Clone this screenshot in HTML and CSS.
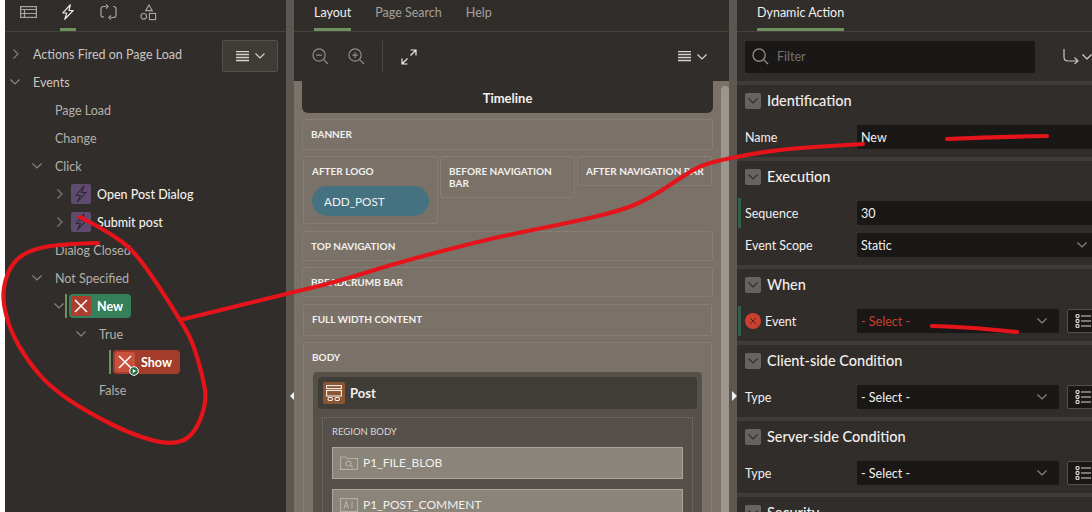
FILE: index.html
```html
<!DOCTYPE html>
<html lang="en">
<head>
    <meta charset="UTF-8">
    <title>Page Designer</title>
    <link rel="stylesheet" href="styles.css">
</head>
<body>
    <svg class="defs" width="0" height="0">
        <symbol id="chev-down" viewBox="0 0 10 6"><path d="M.5.5 5 5 9.500.5" fill="none" stroke="currentColor" stroke-width="1.200"/></symbol>
        <symbol id="chev-right" viewBox="0 0 6 10"><path d="M.5.5 5 5 .5 9.500" fill="none" stroke="currentColor" stroke-width="1.200"/></symbol>
        <symbol id="bolt" viewBox="0 0 20 20"><path d="M13 2 5 11.500h4.500L6.500 18l8.500-9.500h-4.500z" fill="none" stroke="currentColor" stroke-width="1.100" stroke-linejoin="round"/></symbol>
        <symbol id="cross" viewBox="0 0 20 20"><path d="M4 4l12 12M16 4 4 16" fill="none" stroke="currentColor" stroke-width="1.500"/></symbol>
        <symbol id="lines" viewBox="0 0 13 11"><path d="M0 .5h13M0 3.500h13M0 6.500h13M0 9.500h13" fill="none" stroke="currentColor" stroke-width="1.300"/></symbol>
        <symbol id="gadget" viewBox="0 0 16 14"><g fill="none" stroke="currentColor" stroke-width="1.200"><circle cx="2.500" cy="2" r="1.600"/><circle cx="2.500" cy="7" r="1.600"/><circle cx="2.500" cy="12" r="1.600"/><path d="M6 2h10M6 7h10M6 12h10"/></g></symbol>
    </svg>

    <div class="app">
        <!-- Arbre -->
        <section class="panel tree-panel">
            <div class="tabs icon-tabs">
                <a class="icon-tab">
                    <svg width="17" height="12" viewBox="0 0 17 12" fill="none" stroke="#a8a4a0" stroke-width="1.200"><rect x=".6" y=".6" width="15.800" height="10.800"/><path d="M.6 3.500h15.800M.6 7.500h15.800M4.500 3.500v8"/></svg>
                </a>
                <a class="icon-tab active">
                    <svg width="14" height="16" viewBox="0 0 14 17" fill="none" stroke="#f0eeec" stroke-width="1.200" stroke-linejoin="round"><path d="M9.500.8 1.500 9.500h4.300L3.500 16.200l9-9.300H8z"/></svg>
                </a>
                <a class="icon-tab">
                    <svg width="17" height="17" viewBox="0 0 17 17" fill="none" stroke="#a8a4a0" stroke-width="1.200"><path d="M6 2.500H3.500Q1 2.500 1 5v6q0 2 2.500 2H4M11 13.500h2.500Q16 13.500 16 11V5q0-2.500-2.500-2.500H13"/><path d="M6 .5 8 2.500 6 4.500M11 11.500l-2 2 2 2"/></svg>
                </a>
                <a class="icon-tab">
                    <svg width="17" height="17" viewBox="0 0 18 18" fill="none" stroke="#a8a4a0" stroke-width="1.200"><path d="M9.500 1 13 7H6z"/><circle cx="4" cy="13" r="3"/><rect x="10" y="10" width="6.500" height="6.500"/></svg>
                </a>
            </div>
            <button class="menu-btn" type="button">
                <svg class="lines"><use href="#lines"/></svg>
                <svg class="chev-d bright"><use href="#chev-down"/></svg>
            </button>
            <ul class="tree">
                <li class="row"><span class="slot"><svg class="chev-r"><use href="#chev-right"/></svg></span>Actions Fired on Page Load</li>
                <li>
                    <div class="row"><span class="slot"><svg class="chev-d"><use href="#chev-down"/></svg></span>Events</div>
                    <ul>
                        <li class="row"><span class="slot"></span>Page Load</li>
                        <li class="row"><span class="slot"></span>Change</li>
                        <li>
                            <div class="row"><span class="slot"><svg class="chev-d"><use href="#chev-down"/></svg></span>Click</div>
                            <ul>
                                <li class="row strong">
                                    <span class="slot short"><svg class="chev-r"><use href="#chev-right"/></svg></span>
                                    <span class="da-icon"><svg><use href="#bolt"/></svg></span>Open Post Dialog
                                </li>
                                <li class="row strong">
                                    <span class="slot short"><svg class="chev-r"><use href="#chev-right"/></svg></span>
                                    <span class="da-icon"><svg><use href="#bolt"/></svg></span>Submit post
                                </li>
                            </ul>
                        </li>
                        <li class="row"><span class="slot"></span>Dialog Closed</li>
                        <li>
                            <div class="row"><span class="slot"><svg class="chev-d"><use href="#chev-down"/></svg></span>Not Specified</div>
                            <ul>
                                <li>
                                    <div class="row">
                                        <span class="slot tiny"><svg class="chev-d"><use href="#chev-down"/></svg></span>
                                        <span class="badge ok"><span class="badge-x"><svg><use href="#cross"/></svg></span>New</span>
                                    </div>
                                    <ul>
                                        <li>
                                            <div class="row"><span class="slot"><svg class="chev-d"><use href="#chev-down"/></svg></span>True</div>
                                            <ul>
                                                <li class="row">
                                                    <span class="slot tiny"></span>
                                                    <span class="badge bad"><span class="badge-x"><svg><use href="#cross"/></svg></span>Show
                                                        <svg class="play" width="10" height="10" viewBox="0 0 10 10"><circle cx="5" cy="5" r="4.300" fill="#2a6a4c" stroke="#fff" stroke-width="1"/><path d="M3.800 3v4L7 5z" fill="#fff"/></svg>
                                                    </span>
                                                </li>
                                            </ul>
                                        </li>
                                        <li class="row"><span class="slot"></span>False</li>
                                    </ul>
                                </li>
                            </ul>
                        </li>
                    </ul>
                </li>
            </ul>
        </section>

        <div class="gutter"><span class="tri left"></span></div>

        <!-- Layout -->
        <section class="panel layout-panel">
            <div class="tabs">
                <a class="tab active">Layout</a>
                <a class="tab">Page Search</a>
                <a class="tab">Help</a>
            </div>
            <div class="toolbar">
                <svg width="17" height="17" viewBox="0 0 18 18" fill="none" stroke="#8f8b86" stroke-width="1.300"><circle cx="7.500" cy="7.500" r="6.500"/><path d="M12.300 12.300 17 17M4.500 7.500h6"/></svg>
                <svg width="17" height="17" viewBox="0 0 18 18" fill="none" stroke="#8f8b86" stroke-width="1.300"><circle cx="7.500" cy="7.500" r="6.500"/><path d="M12.300 12.300 17 17M4.500 7.500h6M7.500 4.500v6"/></svg>
                <span class="sep"></span>
                <svg width="16" height="16" viewBox="0 0 16 16" fill="none" stroke="#f0eeec" stroke-width="1.200"><path d="M1 15 6.500 9.500M9.500 6.500 15 1M9.500 1H15v5.500M1 9.500V15h5.500"/></svg>
                <span class="toolbar-menu">
                    <svg class="lines"><use href="#lines"/></svg>
                    <svg class="chev-d bright"><use href="#chev-down"/></svg>
                </span>
            </div>
            <div class="canvas">
                <div class="canvas-body">
                    <div class="timeline">Timeline</div>
                    <div class="slotbox banner">BANNER</div>
                    <div class="logo-row">
                        <div class="slotbox after-logo">
                            AFTER LOGO
                            <span class="pill">ADD_POST</span>
                        </div>
                        <div class="slotbox before-nav">BEFORE NAVIGATION BAR</div>
                        <div class="slotbox after-nav">AFTER NAVIGATION BAR</div>
                    </div>
                    <div class="slotbox banner">TOP NAVIGATION</div>
                    <div class="slotbox banner">BREADCRUMB BAR</div>
                    <div class="slotbox inset tall">FULL WIDTH CONTENT</div>
                    <div class="slotbox inset body-slot">
                        BODY
                        <div class="region">
                            <div class="region-head">
                                <span class="region-icon">
                                    <svg width="16" height="16" viewBox="0 0 16 16" fill="none" stroke="#f2ece6" stroke-width="1.100"><rect x=".6" y=".6" width="14.800" height="3"/><rect x=".6" y="5.500" width="14.800" height="5.500"/><rect x="2" y="12.500" width="4.500" height="3" rx="1.400"/><rect x="9" y="12.500" width="4.500" height="3" rx="1.400"/></svg>
                                </span>
                                Post
                            </div>
                            <div class="region-body">
                                REGION BODY
                                <div class="item">
                                    <svg width="18" height="14" viewBox="0 0 18 14" fill="none" stroke="#b5b0a9" stroke-width="1.100"><path d="M.6 1h5l1.500 1.500h10.300v10.900H.6z"/><circle cx="8.500" cy="7.500" r="2.500"/><path d="m10.300 9.300 2.500 2"/></svg>
                                    P1_FILE_BLOB
                                </div>
                                <div class="item">
                                    <svg width="18" height="14" viewBox="0 0 18 14" fill="none" stroke="#b5b0a9" stroke-width="1.100"><rect x=".6" y=".6" width="16.800" height="12.800"/><path d="m4 10.500 2.300-7 2.300 7M4.800 8.300h3M12 3.500v7"/></svg>
                                    P1_POST_COMMENT
                                </div>
                            </div>
                        </div>
                    </div>
                </div>
                <div class="scrollbar"></div>
            </div>
        </section>

        <div class="gutter"><span class="tri right"></span></div>

        <!-- Proprietes -->
        <section class="panel props-panel">
            <div class="tabs">
                <a class="tab active">Dynamic Action</a>
            </div>
            <div class="filter-row">
                <div class="filter">
                    <svg width="17" height="17" viewBox="0 0 18 18" fill="none" stroke="#8f8b86" stroke-width="1.400"><circle cx="7.500" cy="7.500" r="6.500"/><path d="M12.300 12.300 17 17"/></svg>
                    Filter
                </div>
                <span class="goto">
                    <svg width="16" height="15" viewBox="0 0 16 15" fill="none" stroke="#c9c6c2" stroke-width="1.200"><path d="M1 0v8q0 4 4 4h10M11.500 8.500 15 12l-3.500 3"/></svg>
                    <svg class="chev-d bright"><use href="#chev-down"/></svg>
                </span>
            </div>

            <div class="group">
                <h3><span class="toggle"><svg class="chev-d"><use href="#chev-down"/></svg></span>Identification</h3>
                <div class="prop">
                    <label>Name</label>
                    <div class="field">New</div>
                </div>
            </div>
            <div class="group">
                <h3><span class="toggle"><svg class="chev-d"><use href="#chev-down"/></svg></span>Execution</h3>
                <div class="prop required">
                    <label>Sequence</label>
                    <div class="field">30</div>
                </div>
                <div class="prop">
                    <label>Event Scope</label>
                    <div class="field">Static<svg class="chev-d"><use href="#chev-down"/></svg></div>
                </div>
            </div>
            <div class="group">
                <h3><span class="toggle"><svg class="chev-d"><use href="#chev-down"/></svg></span>When</h3>
                <div class="prop required">
                    <label class="has-error"><span class="err"><svg><use href="#cross"/></svg></span>Event</label>
                    <div class="field error">- Select -<svg class="chev-d"><use href="#chev-down"/></svg></div>
                    <span class="gadget"><svg><use href="#gadget"/></svg></span>
                </div>
            </div>
            <div class="group">
                <h3><span class="toggle"><svg class="chev-d"><use href="#chev-down"/></svg></span>Client-side Condition</h3>
                <div class="prop">
                    <label>Type</label>
                    <div class="field">- Select -<svg class="chev-d"><use href="#chev-down"/></svg></div>
                    <span class="gadget"><svg><use href="#gadget"/></svg></span>
                </div>
            </div>
            <div class="group">
                <h3><span class="toggle"><svg class="chev-d"><use href="#chev-down"/></svg></span>Server-side Condition</h3>
                <div class="prop">
                    <label>Type</label>
                    <div class="field">- Select -<svg class="chev-d"><use href="#chev-down"/></svg></div>
                    <span class="gadget"><svg><use href="#gadget"/></svg></span>
                </div>
            </div>
            <div class="group">
                <h3><span class="toggle"><svg class="chev-d"><use href="#chev-down"/></svg></span>Security</h3>
            </div>
        </section>
    </div>

    <!-- Annotations a la main par-dessus la capture -->
    <svg class="scribble" width="1092" height="512" viewBox="0 0 1092 512" fill="none" stroke="#e5141b" stroke-width="4.200" stroke-linecap="round" stroke-linejoin="round">
        <path d="M98 243Q60 244 45 247Q30 250 21.500 256Q13 262 8.500 272Q4 283 3.500 293Q3 303 6.500 316Q10 330 18.500 345Q27 360 38.500 373.500Q50 387 68.500 399.500Q87 412 110 423.500Q133 435 151.500 440Q170 445 181.500 441Q193 437 200 420Q207 403 205 390Q203 377 197.500 358.500Q192 340 186 330Q180 320 168.500 301.500Q157 283 145 266.500Q133 250 121.500 241.500Q110 233 95 225L80 217"/>
        <path d="M180 320 298 291Q333 283 361.500 274Q390 265 423.500 256Q457 247 482 241Q507 235 540 228.500Q573 222 598 216Q623 210 636.500 204Q650 198 661.500 190.500Q673 183 685 175Q697 167 708.500 163.500Q720 160 741.500 156Q763 152 780 150Q797 148 830 146L863 144"/>
        <path d="M947 139Q997 137 1047 136"/>
        <path d="M932 326Q963 327 985 329L1017 332"/>
    </svg>
</body>
</html>
```

FILE: styles.css
```css
:root {
  --panel: #312d2a;
  --gutter: #5c5750;
  --canvas: #7a7169;
  --divider: #3f3b37;
  --field: #1a1816;
  --text: #f2f0ee;
  --dim: #b4b0ab;
  --green: #6f9160;
}
* { box-sizing: border-box; }
html, body {
  margin: 0;
  height: 512px;
  overflow: hidden;
}
body {
  position: relative;
  background: #fff;
  padding-left: 5px;
  font-family: "Lato", "Liberation Sans", sans-serif;
  font-size: 12.5px;
  color: var(--text);
}
.defs { position: absolute; }
.app {
  display: flex;
  height: 512px;
}
.panel {
  position: relative;
  flex: none;
  height: 512px;
  background: var(--panel);
  overflow: hidden;
}
.tree-panel { width: 281px; }
.layout-panel { width: 435px; display: flex; flex-direction: column; }
.props-panel { width: 362px; }
.gutter {
  position: relative;
  flex: none;
  width: 8px;
  background: var(--gutter);
}
.tri {
  position: absolute;
  top: 391px;
  left: 2px;
  border: 5px solid transparent;
}
.tri.left { left: -1px; border-right-color: #f2f0ee; }
.tri.right { left: 3px; border-left-color: #f2f0ee; }

svg.chev-d { width: 10px; height: 6px; color: #8a8681; }
svg.chev-d.bright { color: #d8d5d1; }
svg.chev-r { width: 6px; height: 10px; color: #7f7b76; }
svg.lines { width: 13px; height: 11px; color: #d8d5d1; }

/* Onglets */
.tabs {
  display: flex;
  height: 32px;
  padding-left: 20px;
  gap: 24px;
  border-bottom: 1px solid #45413d;
}
.tab {
  height: 31px;
  padding-top: 5px;
  color: #a5a19c;
}
.tab.active {
  color: var(--text);
  border-bottom: 3px solid var(--green);
}
.icon-tabs { gap: 0; padding-left: 3px; }
.icon-tab {
  display: flex;
  justify-content: center;
  width: 40px;
  height: 31px;
  padding-top: 4px;
}
.icon-tab:first-child { padding-top: 6px; }
.icon-tab.active { position: relative; }
.icon-tab.active::after {
  content: "";
  position: absolute;
  left: 12px;
  bottom: 0;
  width: 16px;
  height: 3px;
  background: var(--green);
}

/* Arbre */
.menu-btn {
  position: absolute;
  top: 40px;
  left: 217px;
  display: flex;
  align-items: center;
  justify-content: center;
  gap: 6px;
  width: 56px;
  height: 32px;
  padding: 0;
  background: #3f3b37;
  border: 1px solid #56514c;
  border-radius: 2px;
}
.tree, .tree ul {
  list-style: none;
  margin: 0;
  padding: 0;
}
.tree { padding: 8px 0 0 4px; color: var(--dim); }
.tree ul { padding-left: 22px; }
.row {
  display: flex;
  align-items: center;
  height: 28px;
}
.tree > .row, .tree > li > .row { color: #c9c6c2; }
.slot {
  flex: none;
  display: flex;
  align-items: center;
  width: 24px;
  height: 28px;
  padding-left: 1px;
}
.slot .chev-r { margin-left: 3px; }
.slot.short { width: 18px; }
.slot.tiny { width: 12px; }
.strong { color: var(--text); font-weight: 500; }
.da-icon {
  flex: none;
  width: 20px;
  height: 20px;
  margin-right: 6px;
  background: #5f4a70;
  border-radius: 2px;
  color: #2b2630;
}
.da-icon svg, .badge-x svg, .err svg { display: block; width: 100%; height: 100%; }
.badge {
  position: relative;
  display: flex;
  align-items: center;
  height: 24px;
  margin-left: 4px;
  padding: 0 8px 0 2px;
  color: #fff;
  font-weight: 700;
  border-radius: 4px;
}
.badge::before {
  content: "";
  position: absolute;
  left: -4px;
  top: 0;
  bottom: 0;
  width: 2px;
  background: var(--green);
}
.badge.ok { background: #35805a; }
.badge.bad { background: #a33c2b; }
.badge-x {
  width: 20px;
  height: 20px;
  margin-right: 6px;
  border-radius: 2px;
  color: #fff;
}
.ok .badge-x { background: #ad3d2e; }
.bad .badge-x { background: #c9503a; }
.play { position: absolute; left: 16px; top: 16px; }

/* Layout */
.toolbar {
  display: flex;
  align-items: center;
  flex: none;
  height: 49px;
  padding: 0 22px 0 18px;
  gap: 19px;
}
.sep { width: 1px; height: 32px; margin-left: -2px; margin-right: -1px; background: #4b4743; }
.toolbar-menu { display: flex; align-items: center; gap: 6px; margin-left: auto; }
.canvas {
  flex: 1;
  display: flex;
  min-height: 0;
  overflow: hidden;
  background: var(--canvas);
}
.canvas-body {
  flex: 1;
  min-width: 0;
  padding: 0 8px;
}
.scrollbar {
  flex: none;
  width: 8px;
  margin-top: 5px;
  background: #9c968f;
  border-radius: 4px 4px 0 0;
}
.timeline {
  height: 32px;
  padding-top: 1px;
  line-height: 32px;
  text-align: center;
  font-size: 13px;
  font-weight: 700;
  background: var(--panel);
  border-radius: 0 0 6px 6px;
  margin-bottom: 6px;
}
.slotbox {
  border: 1px dotted #938a82;
  border-radius: 3px;
  font-size: 10px;
  font-weight: 700;
  line-height: 12px;
}
.banner {
  height: 30px;
  padding: 8px 8px;
  margin-bottom: 6px;
}
.banner:nth-child(2) { height: 31px; padding-top: 8px; }
.inset { margin: 0 1px; padding: 8px; }
.tall { height: 32px; margin-bottom: 6px; margin-top: 7px; }
.logo-row {
  display: flex;
  align-items: flex-start;
  gap: 2px;
  margin: 0 1px 7px;
}
.logo-row .slotbox { width: 135px; padding: 8px 8px; }
.after-logo { height: 68px; }
.before-nav { height: 42px; }
.after-nav { height: 30px; white-space: nowrap; }
.pill {
  display: block;
  width: 117px;
  height: 30px;
  margin-top: 9px;
  padding-left: 12px;
  background: #457281;
  border-radius: 15px;
  font-size: 11.7px;
  font-weight: 400;
  line-height: 30px;
}
.body-slot { height: 200px; }
.region {
  margin: 9px 1px 0;
  padding: 5px;
  height: 200px;
  background: #55504a;
  border-radius: 4px;
}
.region-head {
  display: flex;
  align-items: center;
  gap: 5px;
  height: 32px;
  padding-left: 5px;
  background: #403c36;
  border-radius: 4px;
  font-size: 13px;
}
.region-icon {
  display: flex;
  align-items: center;
  justify-content: center;
  width: 22px;
  height: 22px;
  background: #8a5532;
  border-radius: 2px;
}
.region-body {
  margin: 8px 4px 0;
  padding: 8px 9px;
  border: 1px dotted #7a746c;
  font-size: 9.500px;
  font-weight: 400;
  color: #dcd9d5;
}
.item {
  display: flex;
  align-items: center;
  gap: 5px;
  height: 32px;
  margin-top: 9px;
  padding-left: 7px;
  background: #8a847b;
  border: 1px solid #aaa59d;
  font-size: 12px;
  color: var(--text);
}
.item + .item { margin-top: 10px; }

/* Proprietes */
.filter-row {
  display: flex;
  align-items: center;
  height: 49px;
  padding-left: 8px;
}
.filter {
  display: flex;
  align-items: center;
  gap: 8px;
  width: 290px;
  height: 32px;
  padding-left: 7px;
  background: var(--field);
  border-radius: 2px;
  color: #76726d;
}
.goto {
  display: flex;
  align-items: center;
  gap: 3px;
  margin-left: 28px;
}
.group {
  padding: 8px 0 8px 8px;
  border-top: 4px solid var(--divider);
}
.group h3 {
  display: flex;
  align-items: center;
  gap: 6px;
  height: 16px;
  margin: 0 0 16px;
  font-size: 14.500px;
  font-weight: 500;
  line-height: 14px;
}
.toggle {
  display: flex;
  align-items: center;
  justify-content: center;
  width: 16px;
  height: 16px;
  background: #67635e;
  border-radius: 2px;
}
.toggle .chev-d { color: #312d2a; }
.prop {
  position: relative;
  display: flex;
  align-items: center;
  gap: 0;
  height: 24px;
  margin-bottom: 8px;
}
.prop:last-child { margin-bottom: 0; }
.prop.required::before {
  content: "";
  position: absolute;
  left: -7px;
  top: -3px;
  bottom: -3px;
  width: 3px;
  background: #2f5f48;
}
.prop label { flex: none; width: 112px; }
.has-error { display: flex; align-items: center; gap: 4px; }
.err {
  width: 16px;
  height: 16px;
  padding: 3px;
  background: #c9402f;
  border-radius: 50%;
  color: #3a1510;
}
.field {
  flex: 1;
  display: flex;
  align-items: center;
  justify-content: space-between;
  height: 24px;
  padding: 0 12px 0 4px;
  background: var(--field);
  border-radius: 2px;
}
.field.error { color: #c9402f; }
.gadget {
  flex: none;
  display: flex;
  align-items: center;
  justify-content: center;
  width: 32px;
  height: 24px;
  margin-left: 8px;
  background: var(--field);
  border: 1px solid #55504b;
  border-radius: 2px;
  color: #d8d5d1;
}
.gadget svg { width: 16px; height: 14px; }

.scribble {
  position: absolute;
  top: 0;
  left: 0;
  pointer-events: none;
}
```
